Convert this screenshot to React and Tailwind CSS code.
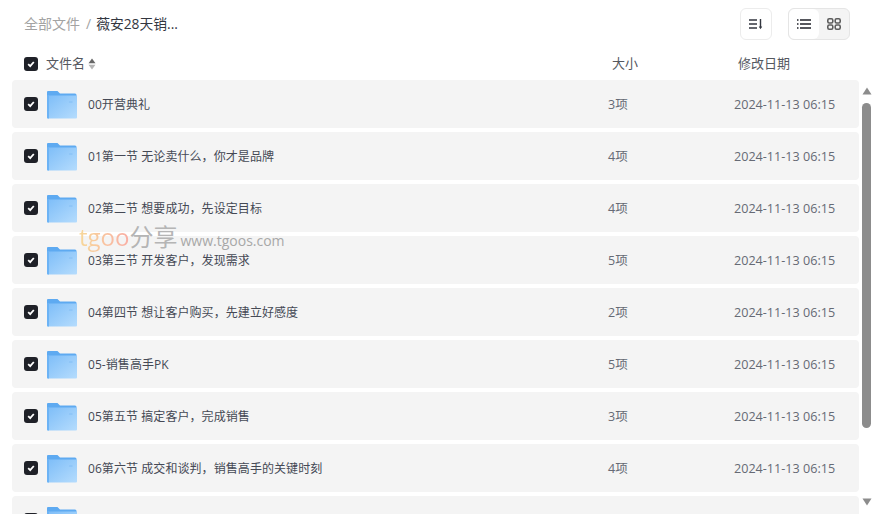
import { useId } from "react";

const files = [
  { name: "00开营典礼", count: "3项" },
  { name: "01第一节 无论卖什么，你才是品牌", count: "4项" },
  { name: "02第二节 想要成功，先设定目标", count: "4项" },
  { name: "03第三节 开发客户，发现需求", count: "5项" },
  { name: "04第四节 想让客户购买，先建立好感度", count: "2项" },
  { name: "05-销售高手PK", count: "5项" },
  { name: "05第五节 搞定客户，完成销售", count: "3项" },
  { name: "06第六节 成交和谈判，销售高手的关键时刻", count: "4项" },
  { name: "07第七节 售后服务，赢得转介绍", count: "3项" },
];

const font = "font-['Open_Sans','Noto_Sans_CJK_SC',sans-serif]";

function Check() {
  return (
    <span className="flex h-[14px] w-[14px] shrink-0 items-center justify-center rounded-[3px] bg-[#1f2128]">
      <svg width="10" height="10" viewBox="0 0 10 10" fill="none">
        <path d="M2.200 5.200 4.200 7.200 7.800 3" stroke="#fff" strokeWidth="1.800" />
      </svg>
    </span>
  );
}

function Folder() {
  const id = useId();
  return (
    <svg width="30" height="28" viewBox="0 0 30 28" className="block shrink-0">
      <defs>
        <linearGradient id={id} x1="0" y1="0" x2="1" y2="1">
          <stop offset="0" stopColor="#7dbdf8" />
          <stop offset="1" stopColor="#b5dcfd" />
        </linearGradient>
      </defs>
      <path d="M1 0h9.500l2.500 2.500H28a1.500 1.500 0 0 1 1.500 1.500v4H0V1a1 1 0 0 1 1-1Z" fill="#5eaaf1" />
      <path d="M1 4.500h28a1 1 0 0 1 1 1V26.500a1 1 0 0 1-1 1H1a1 1 0 0 1-1-1V5.500a1 1 0 0 1 1-1Z" fill={`url(#${id})`} />
      <path d="M0 5.500V26.500a1 1 0 0 0 1 1h1V4.500H1a1 1 0 0 0-1 1Z" fill="#6cb3f5" />
      <rect x="22" y="10" width="3.500" height="2" fill="#8fc6f8" />
    </svg>
  );
}

function Row({ file }) {
  return (
    <div className="flex h-12 shrink-0 items-center rounded-[4px] bg-[#f4f4f4] pl-3 text-xs text-[#454955]">
      <Check />
      <span className="ml-[9px] pt-[1px]">
        <Folder />
      </span>
      <span className="ml-[11px] w-[520px] whitespace-nowrap pt-[2px] tracking-[0.07px]">{file.name}</span>
      <span className="w-[126px] pt-[2px] text-[12.500px] text-[#666a75]">{file.count}</span>
      <span className="whitespace-nowrap pt-[2px] text-[12.600px] text-[#666a75]">2024-11-13 06:15</span>
    </div>
  );
}

export default function App() {
  return (
    <div className={`relative flex h-[514px] w-[874px] flex-col overflow-hidden bg-white ${font}`}>
      {/* top bar */}
      <div className="flex h-12 shrink-0 items-center pl-6 pr-6">
        <span className="text-sm text-[#a3a3a3]">全部文件</span>
        <span className="ml-[6px] mr-[5px] text-sm text-[#a3a3a3]">/</span>
        <span className="text-[13.800px] text-[#33363f]">薇安28天销...</span>
        <div className="ml-auto flex items-center gap-4">
          <div className="flex h-8 w-8 items-center justify-center rounded-md border border-[#ececec]">
            <svg width="14" height="12" viewBox="0 0 14 12" fill="none" stroke="#33363f" strokeWidth="1.400">
              <path d="M0 2h8M0 6h8M0 10h8M11.500 1v9" />
              <path d="M9.800 8.500h3.400L11.500 11.200Z" fill="#33363f" stroke="none" />
            </svg>
          </div>
          <div className="flex h-8 w-[62px] rounded-md border border-[#e5e5e5] bg-[#f4f4f4]">
            <div className="flex w-[30px] items-center justify-center rounded-md bg-white">
              <svg width="14" height="10" viewBox="0 0 14 10" fill="none" stroke="#1f2128" strokeWidth="1.400">
                <path d="M3 1h11M3 5h11M3 9h11M0 1h1.500M0 5h1.500M0 9h1.500" />
              </svg>
            </div>
            <div className="flex flex-1 items-center justify-center">
              <svg width="14" height="12" viewBox="0 0 14 12" fill="none" stroke="#5c5c5c" strokeWidth="1.600">
                <rect x="0.800" y="0.800" width="5" height="4.200" rx="1.400" />
                <rect x="8.200" y="0.800" width="5" height="4.200" rx="1.400" />
                <rect x="0.800" y="7" width="5" height="4.200" rx="1.400" />
                <rect x="8.200" y="7" width="5" height="4.200" rx="1.400" />
              </svg>
            </div>
          </div>
        </div>
      </div>

      {/* table header */}
      <div className="flex h-8 shrink-0 items-center pl-6 text-[13px] text-[#55585f]">
        <Check />
        <span className="ml-2">文件名</span>
        <svg width="8" height="12" viewBox="0 0 8 12" className="ml-[3px]">
          <path d="M4 .5 7.500 5.300H.5Z" fill="#666" />
          <path d="M4 11.500 .5 6.700h7Z" fill="#b5b5b5" />
        </svg>
        <span className="ml-[516px] w-[126px]">大小</span>
        <span>修改日期</span>
      </div>

      {/* list + scrollbar */}
      <div className="flex min-h-0 flex-1">
        <div className="ml-3 flex w-[847px] flex-col gap-1 overflow-hidden">
          {files.map((f) => (
            <Row key={f.name} file={f} />
          ))}
        </div>
        <div className="ml-[3px] flex w-[9px] flex-col items-center">
          <svg width="10" height="8" viewBox="0 0 10 8" className="mt-[7px] shrink-0">
            <path d="M5 .5 9.500 7.500H.5Z" fill="#8c8c8c" />
          </svg>
          <div className="mt-2 h-[325px] w-[9px] shrink-0 rounded-full bg-[#8c8c8c]" />
          <svg width="10" height="8" viewBox="0 0 10 8" className="mt-[70px] shrink-0">
            <path d="M5 7.500 9.500 .5H.5Z" fill="#8c8c8c" />
          </svg>
        </div>
      </div>

      {/* watermark */}
      <div className="pointer-events-none absolute left-[79px] top-[219px] flex items-baseline whitespace-nowrap">
        <span className="bg-gradient-to-r from-[#f7d89a] to-[#f9aea4] bg-clip-text text-[24px] text-transparent">tgoo</span>
        <span className="text-[24px] text-[#b5b5b5]">分享</span>
        <span className="ml-[3px] text-[14px] text-[#a8a8a8]">www.tgoos.com</span>
      </div>
    </div>
  );
}
